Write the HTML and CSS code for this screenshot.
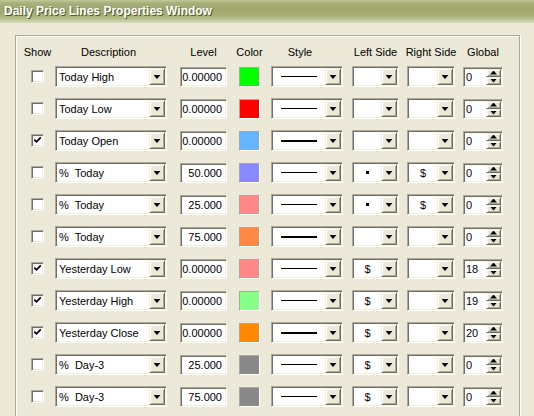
FILE: index.html
```html
<!DOCTYPE html>
<html>
<head>
<meta charset="utf-8">
<link rel="stylesheet" href="styles.css">
</head>
<body>
<div class="title">Daily Price Lines Properties Window</div>
<div class="group">
  <div class="grid head">
    <div class="h">Show</div>
    <div class="h h-desc">Description</div>
    <div class="h">Level</div>
    <div class="h">Color</div>
    <div class="h h-style">Style</div>
    <div class="h">Left Side</div>
    <div class="h">Right Side</div>
    <div class="h">Global</div>
  </div>
  <div class="grid rows">
    <!-- row 1 -->
    <div class="cell"><div class="chk"></div></div>
    <div class="combo desc"><div class="val">Today High</div><div class="btn"><i class="arr"></i></div></div>
    <div class="txt">0.00000</div>
    <div class="sw" style="background:#00ff00"></div>
    <div class="combo style"><div class="val c"><span class="ln"></span></div><div class="btn"><i class="arr"></i></div></div>
    <div class="combo side"><div class="val c"></div><div class="btn"><i class="arr"></i></div></div>
    <div class="combo side2"><div class="val c"></div><div class="btn"><i class="arr"></i></div></div>
    <div class="spin"><div class="val">0</div><div class="sbtns"><div class="sb"><i class="up"></i></div><div class="sb"><i class="dn"></i></div></div></div>
    <!-- row 2 -->
    <div class="cell"><div class="chk"></div></div>
    <div class="combo desc"><div class="val">Today Low</div><div class="btn"><i class="arr"></i></div></div>
    <div class="txt">0.00000</div>
    <div class="sw" style="background:#ff0000"></div>
    <div class="combo style"><div class="val c"><span class="ln"></span></div><div class="btn"><i class="arr"></i></div></div>
    <div class="combo side"><div class="val c"></div><div class="btn"><i class="arr"></i></div></div>
    <div class="combo side2"><div class="val c"></div><div class="btn"><i class="arr"></i></div></div>
    <div class="spin"><div class="val">0</div><div class="sbtns"><div class="sb"><i class="up"></i></div><div class="sb"><i class="dn"></i></div></div></div>
    <!-- row 3 -->
    <div class="cell"><div class="chk on"><svg viewBox="0 0 9 9" width="9" height="9"><path d="M1.3 3.6 L3.4 5.8 L7.8 1.4" fill="none" stroke="#000" stroke-width="1.8"/></svg></div></div>
    <div class="combo desc"><div class="val">Today Open</div><div class="btn"><i class="arr"></i></div></div>
    <div class="txt">0.00000</div>
    <div class="sw" style="background:#66b4ff"></div>
    <div class="combo style"><div class="val c"><span class="ln thick"></span></div><div class="btn"><i class="arr"></i></div></div>
    <div class="combo side"><div class="val c"></div><div class="btn"><i class="arr"></i></div></div>
    <div class="combo side2"><div class="val c"></div><div class="btn"><i class="arr"></i></div></div>
    <div class="spin"><div class="val">0</div><div class="sbtns"><div class="sb"><i class="up"></i></div><div class="sb"><i class="dn"></i></div></div></div>
    <!-- row 4 -->
    <div class="cell"><div class="chk"></div></div>
    <div class="combo desc"><div class="val">%&nbsp; Today</div><div class="btn"><i class="arr"></i></div></div>
    <div class="txt">50.000</div>
    <div class="sw" style="background:#8888ff"></div>
    <div class="combo style"><div class="val c"><span class="ln"></span></div><div class="btn"><i class="arr"></i></div></div>
    <div class="combo side"><div class="val c"><span class="dot"></span></div><div class="btn"><i class="arr"></i></div></div>
    <div class="combo side2"><div class="val c">$</div><div class="btn"><i class="arr"></i></div></div>
    <div class="spin"><div class="val">0</div><div class="sbtns"><div class="sb"><i class="up"></i></div><div class="sb"><i class="dn"></i></div></div></div>
    <!-- row 5 -->
    <div class="cell"><div class="chk"></div></div>
    <div class="combo desc"><div class="val">%&nbsp; Today</div><div class="btn"><i class="arr"></i></div></div>
    <div class="txt">25.000</div>
    <div class="sw" style="background:#ff8888"></div>
    <div class="combo style"><div class="val c"><span class="ln"></span></div><div class="btn"><i class="arr"></i></div></div>
    <div class="combo side"><div class="val c"><span class="dot"></span></div><div class="btn"><i class="arr"></i></div></div>
    <div class="combo side2"><div class="val c">$</div><div class="btn"><i class="arr"></i></div></div>
    <div class="spin"><div class="val">0</div><div class="sbtns"><div class="sb"><i class="up"></i></div><div class="sb"><i class="dn"></i></div></div></div>
    <!-- row 6 -->
    <div class="cell"><div class="chk"></div></div>
    <div class="combo desc"><div class="val">%&nbsp; Today</div><div class="btn"><i class="arr"></i></div></div>
    <div class="txt">75.000</div>
    <div class="sw" style="background:#ff8844"></div>
    <div class="combo style"><div class="val c"><span class="ln thick"></span></div><div class="btn"><i class="arr"></i></div></div>
    <div class="combo side"><div class="val c"></div><div class="btn"><i class="arr"></i></div></div>
    <div class="combo side2"><div class="val c"></div><div class="btn"><i class="arr"></i></div></div>
    <div class="spin"><div class="val">0</div><div class="sbtns"><div class="sb"><i class="up"></i></div><div class="sb"><i class="dn"></i></div></div></div>
    <!-- row 7 -->
    <div class="cell"><div class="chk on"><svg viewBox="0 0 9 9" width="9" height="9"><path d="M1.3 3.6 L3.4 5.8 L7.8 1.4" fill="none" stroke="#000" stroke-width="1.8"/></svg></div></div>
    <div class="combo desc"><div class="val">Yesterday Low</div><div class="btn"><i class="arr"></i></div></div>
    <div class="txt">0.00000</div>
    <div class="sw" style="background:#ff8888"></div>
    <div class="combo style"><div class="val c"><span class="ln"></span></div><div class="btn"><i class="arr"></i></div></div>
    <div class="combo side"><div class="val c">$</div><div class="btn"><i class="arr"></i></div></div>
    <div class="combo side2"><div class="val c"></div><div class="btn"><i class="arr"></i></div></div>
    <div class="spin"><div class="val">18</div><div class="sbtns"><div class="sb"><i class="up"></i></div><div class="sb"><i class="dn"></i></div></div></div>
    <!-- row 8 -->
    <div class="cell"><div class="chk on"><svg viewBox="0 0 9 9" width="9" height="9"><path d="M1.3 3.6 L3.4 5.8 L7.8 1.4" fill="none" stroke="#000" stroke-width="1.8"/></svg></div></div>
    <div class="combo desc"><div class="val">Yesterday High</div><div class="btn"><i class="arr"></i></div></div>
    <div class="txt">0.00000</div>
    <div class="sw" style="background:#88ff88"></div>
    <div class="combo style"><div class="val c"><span class="ln"></span></div><div class="btn"><i class="arr"></i></div></div>
    <div class="combo side"><div class="val c">$</div><div class="btn"><i class="arr"></i></div></div>
    <div class="combo side2"><div class="val c"></div><div class="btn"><i class="arr"></i></div></div>
    <div class="spin"><div class="val">19</div><div class="sbtns"><div class="sb"><i class="up"></i></div><div class="sb"><i class="dn"></i></div></div></div>
    <!-- row 9 -->
    <div class="cell"><div class="chk on"><svg viewBox="0 0 9 9" width="9" height="9"><path d="M1.3 3.6 L3.4 5.8 L7.8 1.4" fill="none" stroke="#000" stroke-width="1.8"/></svg></div></div>
    <div class="combo desc"><div class="val">Yesterday Close</div><div class="btn"><i class="arr"></i></div></div>
    <div class="txt">0.00000</div>
    <div class="sw" style="background:#ff8800"></div>
    <div class="combo style"><div class="val c"><span class="ln thick"></span></div><div class="btn"><i class="arr"></i></div></div>
    <div class="combo side"><div class="val c">$</div><div class="btn"><i class="arr"></i></div></div>
    <div class="combo side2"><div class="val c"></div><div class="btn"><i class="arr"></i></div></div>
    <div class="spin"><div class="val">20</div><div class="sbtns"><div class="sb"><i class="up"></i></div><div class="sb"><i class="dn"></i></div></div></div>
    <!-- row 10 -->
    <div class="cell"><div class="chk"></div></div>
    <div class="combo desc"><div class="val">%&nbsp; Day-3</div><div class="btn"><i class="arr"></i></div></div>
    <div class="txt">25.000</div>
    <div class="sw" style="background:#888888"></div>
    <div class="combo style"><div class="val c"><span class="ln"></span></div><div class="btn"><i class="arr"></i></div></div>
    <div class="combo side"><div class="val c">$</div><div class="btn"><i class="arr"></i></div></div>
    <div class="combo side2"><div class="val c"></div><div class="btn"><i class="arr"></i></div></div>
    <div class="spin"><div class="val">0</div><div class="sbtns"><div class="sb"><i class="up"></i></div><div class="sb"><i class="dn"></i></div></div></div>
    <!-- row 11 -->
    <div class="cell"><div class="chk"></div></div>
    <div class="combo desc"><div class="val">%&nbsp; Day-3</div><div class="btn"><i class="arr"></i></div></div>
    <div class="txt">75.000</div>
    <div class="sw" style="background:#888888"></div>
    <div class="combo style"><div class="val c"><span class="ln"></span></div><div class="btn"><i class="arr"></i></div></div>
    <div class="combo side"><div class="val c">$</div><div class="btn"><i class="arr"></i></div></div>
    <div class="combo side2"><div class="val c"></div><div class="btn"><i class="arr"></i></div></div>
    <div class="spin"><div class="val">0</div><div class="sbtns"><div class="sb"><i class="up"></i></div><div class="sb"><i class="dn"></i></div></div></div>
  </div>
</div>
</body>
</html>
```
FILE: styles.css
```css
html, body {
  margin: 0;
  padding: 0;
  height: 416px;
  background: #ece9d8;
  font-family: "Liberation Sans", Arial, sans-serif;
  font-size: 11px;
  color: #000;
  overflow: hidden;
}
.title {
  height: 23px;
  box-sizing: border-box;
  padding-left: 4px;
  line-height: 22px;
  font-weight: bold;
  font-size: 12px;
  color: #fff;
  text-shadow: 1px 1px 0 #4e5828;
  background: linear-gradient(to bottom, #c3c99a 0px, #a8b07a 3px, #9ea66e 9px, #a6ae76 15px, #b4bc88 18px, #c6cda0 21px, #d9dcc0 23px);
}
.group {
  margin: 12px 0 0 15px;
  width: 505px;
  height: 381px;
  box-sizing: border-box;
  border: 1px solid #aca899;
  border-bottom: 0;
  box-shadow: inset 1px 1px 0 #fff, 1px 0 0 #fff;
  padding: 10px 0 0 15px;
}
.grid {
  display: grid;
  grid-template-columns: 24px 125px 59px 32px 81px 55px 56px 40px;
}
.head {
  height: 13px;
  margin-bottom: 7px;
  line-height: 13px;
}
.h {
  display: flex;
  justify-content: center;
  white-space: nowrap;
  width: 100%;
}
.head .h:nth-child(1) { width: 13px; }
.head .h:nth-child(2) { width: 107px; }
.head .h:nth-child(3) { width: 47px; }
.head .h:nth-child(4) { width: 21px; }
.head .h:nth-child(5) { width: 58px; }
.head .h:nth-child(6) { width: 47px; }
.head .h:nth-child(7) { width: 48px; }
.head .h:nth-child(8) { width: 40px; }
.rows {
  grid-auto-rows: 21px;
  row-gap: 11px;
  align-items: center;
}
.cell {
  display: flex;
  align-items: center;
  height: 21px;
}
.chk {
  width: 13px;
  height: 13px;
  box-sizing: border-box;
  border: 1px solid;
  border-color: #aca899 #fff #fff #aca899;
  box-shadow: inset 1px 1px 0 #716f64, inset -1px -1px 0 #f1efe2;
  background: #fff;
  display: flex;
  align-items: center;
  justify-content: center;
}
.chk svg { display: block; }
.combo, .txt, .spin {
  box-sizing: border-box;
  border: 1px solid;
  border-color: #aca899 #fff #fff #aca899;
  box-shadow: inset 1px 1px 0 #716f64, inset -1px -1px 0 #f1efe2;
  background: #fff;
  padding: 1px;
}
.combo {
  height: 21px;
  display: flex;
}
.desc { width: 112px; }
.style { width: 72px; }
.side { width: 47px; }
.side2 { width: 48px; }
.val {
  flex: 1;
  display: flex;
  align-items: center;
  padding-left: 2px;
  white-space: nowrap;
  overflow: hidden;
}
.val.c {
  justify-content: center;
  padding-left: 0;
}
.btn {
  width: 16px;
  box-sizing: border-box;
  border: 1px solid;
  border-color: #f1efe2 #716f64 #716f64 #f1efe2;
  box-shadow: inset 1px 1px 0 #fff, inset -1px -1px 0 #aca899;
  background: #ece9d8;
  display: flex;
  align-items: center;
  justify-content: center;
}
.arr {
  display: block;
  width: 7px;
  height: 4px;
  background: #000;
  clip-path: polygon(0 0, 100% 0, 50% 100%);
  margin-top: 1px;
}
.ln {
  display: block;
  width: 36px;
  height: 1px;
  background: #000;
}
.ln.thick { height: 2px; }
.dot {
  display: block;
  width: 3px;
  height: 3px;
  background: #000;
}
.txt {
  width: 47px;
  height: 20px;
  text-align: right;
  padding-right: 4px;
  line-height: 16px;
}
.sw {
  width: 21px;
  height: 20px;
  box-sizing: border-box;
  border: 1px solid;
  border-color: #aca899 #fff #fff #aca899;
}
.spin {
  width: 40px;
  height: 20px;
  display: flex;
}
.spin .val { padding-left: 1px; }
.sbtns {
  width: 15px;
  display: flex;
  flex-direction: column;
}
.sb {
  flex: 1;
  box-sizing: border-box;
  border: 1px solid;
  border-color: #f1efe2 #716f64 #716f64 #f1efe2;
  box-shadow: inset 1px 1px 0 #fff, inset -1px -1px 0 #aca899;
  background: #ece9d8;
  display: flex;
  align-items: center;
  justify-content: center;
}
.up, .dn {
  display: block;
  width: 7px;
  height: 4px;
  background: #000;
}
.up { clip-path: polygon(50% 0, 100% 100%, 0 100%); }
.dn { clip-path: polygon(0 0, 100% 0, 50% 100%); }
```
